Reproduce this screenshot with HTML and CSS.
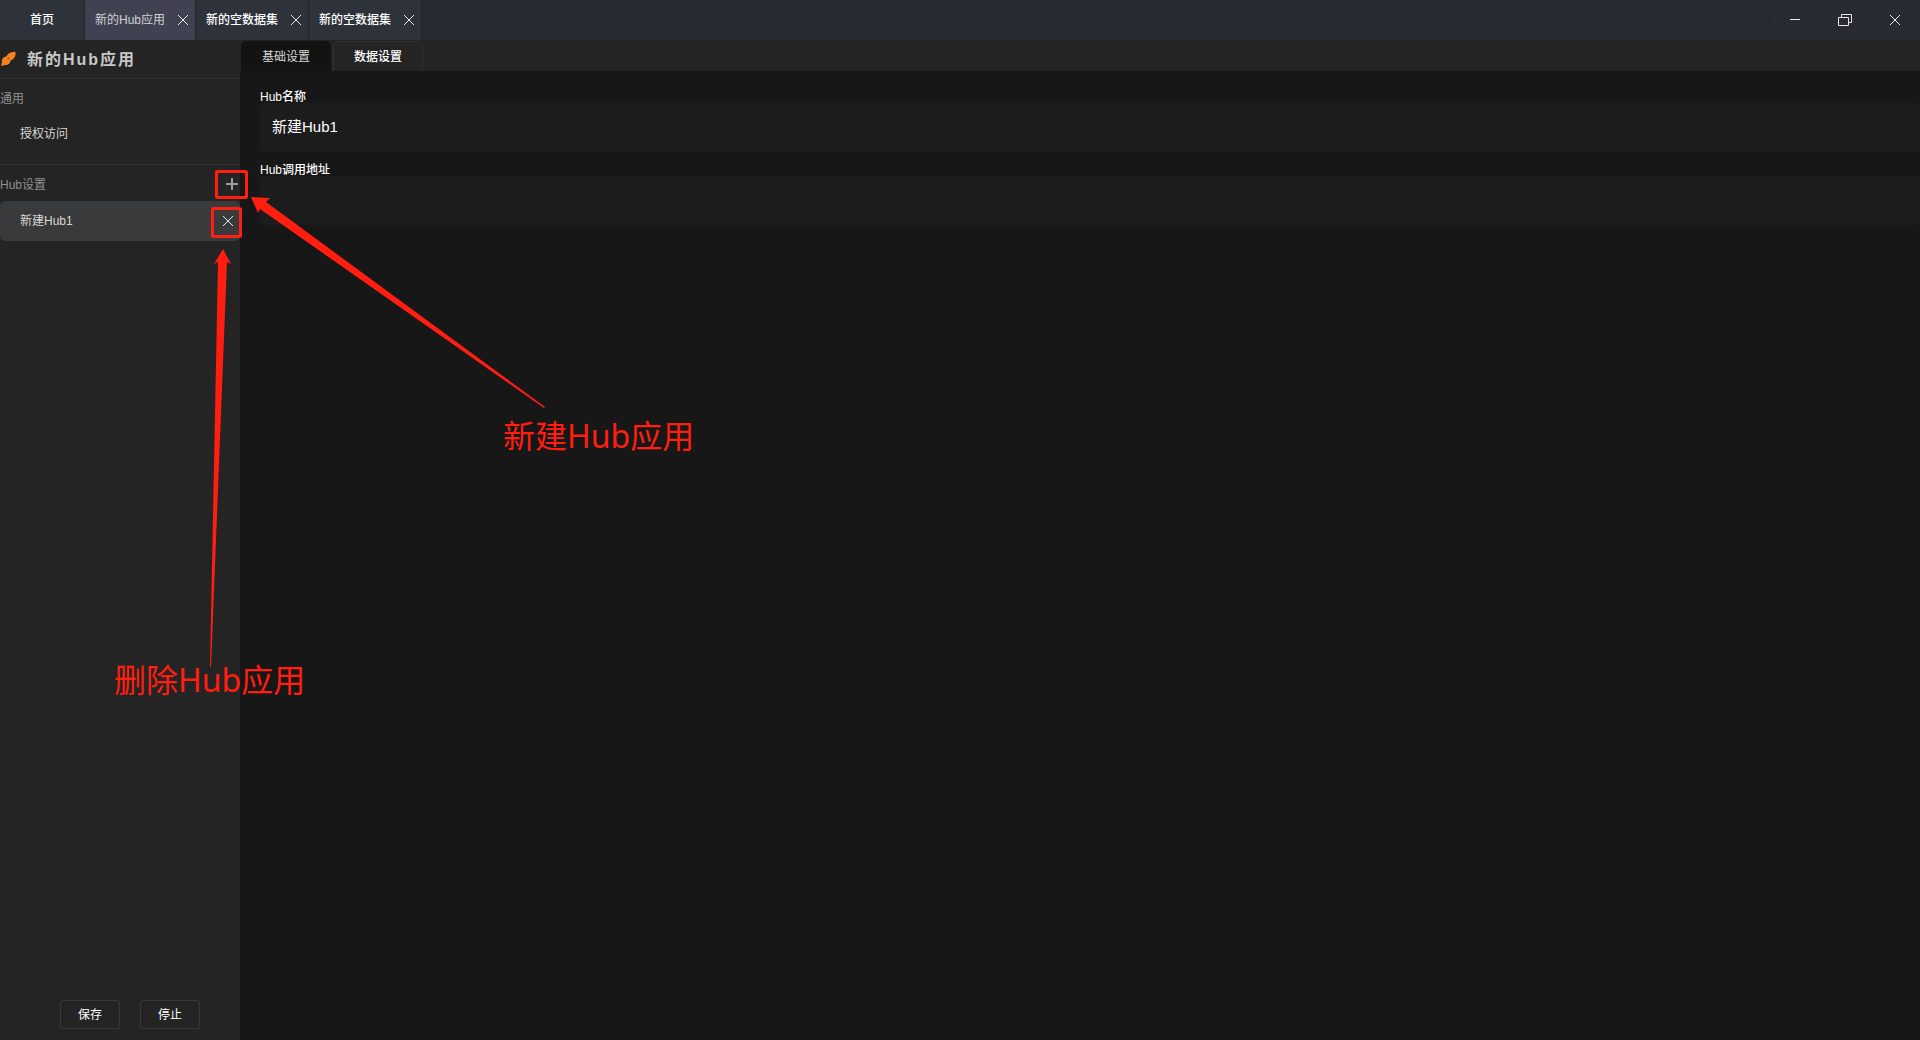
FILE: index.html
```html
<!DOCTYPE html>
<html lang="zh-CN">
<head>
  <meta charset="UTF-8" />
  <meta name="viewport" content="width=device-width, initial-scale=1.0" />
  <title>新的Hub应用</title>
  <link rel="stylesheet" href="styles.css">
</head>
<body>
  <header class="titlebar">
    <nav class="window-tabs">
      <div class="window-tab home"><button class="tab-name">首页</button></div>
      <div class="window-tab active">
        <button class="tab-name">新的Hub应用</button>
        <button class="close-btn" aria-label="关闭"><svg width="12" height="12" viewBox="0 0 12 12"><path d="M1 1L11 11M11 1L1 11" /></svg></button>
      </div>
      <div class="window-tab">
        <button class="tab-name">新的空数据集</button>
        <button class="close-btn" aria-label="关闭"><svg width="12" height="12" viewBox="0 0 12 12"><path d="M1 1L11 11M11 1L1 11" /></svg></button>
      </div>
      <div class="window-tab">
        <button class="tab-name">新的空数据集</button>
        <button class="close-btn" aria-label="关闭"><svg width="12" height="12" viewBox="0 0 12 12"><path d="M1 1L11 11M11 1L1 11" /></svg></button>
      </div>
    </nav>
    <div class="window-controls">
      <button aria-label="最小化"><svg width="14" height="12" viewBox="0 0 14 12"><path d="M2 5.5H12" /></svg></button>
      <button aria-label="还原"><svg width="14" height="12" viewBox="0 0 14 12"><path d="M0.5 3.5H10.5V11.5H0.5ZM3.5 3.5V0.5H13.5V8.5H10.5" /></svg></button>
      <button aria-label="关闭"><svg width="12" height="12" viewBox="0 0 12 12"><path d="M1 1L11 11M11 1L1 11" /></svg></button>
    </div>
  </header>

  <div class="workspace">
    <aside class="sidebar">
      <div class="app-title">
        <svg class="app-icon" width="16" height="16" viewBox="0 0 16 16">
          <path d="M15.500 1C11.500 0.500 7.500 2 6.500 5.500C3.500 5.500 1.500 8 2 11L1 15L5 14C8 14.500 10.500 12.500 10.500 9.500C14 8.500 16 5 15.500 1Z" />
          <circle cx="8.500" cy="7.500" r="1" />
        </svg>
        <h1>新的Hub应用</h1>
      </div>

      <section class="side-group general">
        <div class="group-head"><h2>通用</h2></div>
        <button class="side-item">授权访问</button>
      </section>

      <section class="side-group">
        <div class="group-head">
          <h2>Hub设置</h2>
          <button class="add-btn" aria-label="新建"><svg width="14" height="14" viewBox="0 0 14 14"><path d="M7 1V13M1 7H13" /></svg></button>
        </div>
        <div class="side-row active">
          <button class="side-item">新建Hub1</button>
          <button class="close-btn" aria-label="删除"><svg width="12" height="12" viewBox="0 0 12 12"><path d="M1 1L11 11M11 1L1 11" /></svg></button>
        </div>
      </section>

      <div class="side-actions">
        <button>保存</button>
        <button>停止</button>
      </div>
    </aside>

    <main class="content">
      <nav class="page-tabs">
        <button class="active">基础设置</button>
        <button>数据设置</button>
      </nav>
      <form class="settings">
        <label for="hubName">Hub名称</label>
        <input type="text" id="hubName" value="新建Hub1" />
        <label for="hubUrl">Hub调用地址</label>
        <input type="text" id="hubUrl" />
      </form>
    </main>
  </div>

  <!-- red notes over the page -->
  <div class="notes">
    <svg class="note-lines" width="560" height="680" viewBox="0 0 560 680">
      <rect x="216.500" y="171.500" width="30" height="26" rx="1" />
      <rect x="212.500" y="208.500" width="28" height="28" rx="1" />
      <path d="M251 197L270 198L266 202L545 407L544 408L260 209L258 213Z" />
      <path d="M223 249L231 264L227 262L211 667H210L218 262L214 264Z" />
    </svg>
    <p class="note add-note">新建Hub应用</p>
    <p class="note delete-note">删除Hub应用</p>
  </div>
</body>
</html>
```
FILE: styles.css
```css
* {
  box-sizing: border-box;
}

body {
  margin: 0;
  height: 100vh;
  display: flex;
  flex-direction: column;
  overflow: hidden;
  background-color: #171717;
  color: #ffffff;
  font-family: "Liberation Sans", "Noto Sans CJK SC", sans-serif;
  font-size: 12px;
}

h1, h2, p {
  margin: 0;
}

button {
  padding: 0;
  border: none;
  background: none;
  color: inherit;
  font: inherit;
  cursor: pointer;
}

svg {
  display: block;
  fill: none;
  stroke: #e8e8e8;
}

/* title bar */
.titlebar {
  display: flex;
  justify-content: space-between;
  height: 40px;
  background-color: #282b34;
}

.window-tabs {
  display: flex;
}

.window-tab {
  display: flex;
  align-items: center;
  gap: 12px;
  padding: 0 6px 0 10px;
  border-right: 1px solid #23252b;
  background-color: #2e323b;
  font-weight: 500;
}

.window-tab.home {
  padding: 0 30px;
}

.window-tab.active {
  background-color: #404251;
  color: #d0d0d4;
  font-weight: 400;
}

.tab-name {
  padding-bottom: 3px;
}

.window-controls {
  display: flex;
  align-items: center;
}

.window-controls button {
  display: flex;
  justify-content: center;
  width: 50px;
}

.window-controls::before {
  content: "";
  width: 1px;
  height: 20px;
  background-color: #23252b;
}

/* sidebar */
.workspace {
  flex: 1;
  display: flex;
  min-height: 0;
}

.sidebar {
  width: 240px;
  display: flex;
  flex-direction: column;
  background-color: #242424;
}

.app-title {
  display: flex;
  align-items: center;
  gap: 11px;
  height: 39px;
  border-bottom: 1px solid #303030;
}

.app-title h1 {
  padding-bottom: 2px;
  color: #c8c8c8;
  font-size: 16px;
  letter-spacing: 2px;
}

.app-icon {
  fill: #f58220;
  stroke: none;
}

.app-icon circle {
  fill: #a35314;
}

.group-head {
  display: flex;
  align-items: center;
  justify-content: space-between;
  height: 36px;
  padding: 2px 1px 0 0;
}

.group-head h2 {
  padding-bottom: 2px;
  color: #909090;
  font-size: 12px;
  font-weight: 400;
}

.general {
  padding-bottom: 15px;
  border-bottom: 1px solid #303030;
}

.side-item {
  height: 34px;
  padding: 0 20px;
  color: #d8d8d8;
}

.add-btn svg {
  stroke: #a0a0a0;
  stroke-width: 2;
}

.side-row {
  display: flex;
  align-items: center;
  justify-content: space-between;
  height: 40px;
  padding-right: 6px;
  border-radius: 5px;
}

.side-row.active {
  background-color: #393a3c;
}

.side-row .side-item {
  padding-bottom: 3px;
}

.side-actions {
  display: flex;
  gap: 20px;
  margin-top: auto;
  padding: 0 0 11px 60px;
}

.side-actions button {
  width: 60px;
  height: 29px;
  padding-bottom: 2px;
  border: 1px solid #383838;
  border-radius: 3px;
}

/* content */
.content {
  flex: 1;
  min-width: 0;
}

.page-tabs {
  display: flex;
  gap: 2px;
  height: 31px;
  padding: 1px 1px 0;
  background-color: #242424;
}

.page-tabs button {
  width: 90px;
  padding-bottom: 2px;
  border: 1px solid #303030;
  border-bottom: none;
  border-radius: 5px 5px 0 0;
  font-weight: 500;
}

.page-tabs button.active {
  border-color: #131313;
  background-color: #131313;
  color: #d8d8d8;
  font-weight: 400;
}

.settings {
  display: flex;
  flex-direction: column;
  padding: 20px 0 0 20px;
}

.settings label {
  line-height: 12px;
  font-weight: 500;
}

.settings input {
  height: 49px;
  margin-bottom: 12px;
  padding: 0 12px 4px;
  border: none;
  border-radius: 4px;
  outline: none;
  background-color: #1c1c1c;
  color: #ffffff;
  font: inherit;
  font-size: 15px;
}

/* notes */
.note-lines {
  position: absolute;
  top: 0;
  left: 0;
  fill: #ff1e10;
  stroke: none;
  pointer-events: none;
}

.note-lines rect {
  fill: none;
  stroke: #ff1e10;
  stroke-width: 3;
}

.note {
  position: absolute;
  color: #ff1e10;
  font-family: "Noto Sans", "Noto Sans CJK SC", sans-serif;
  font-size: 32px;
  line-height: 40px;
  white-space: nowrap;
}

.add-note {
  top: 416px;
  left: 503px;
}

.delete-note {
  top: 660px;
  left: 114px;
}
```
